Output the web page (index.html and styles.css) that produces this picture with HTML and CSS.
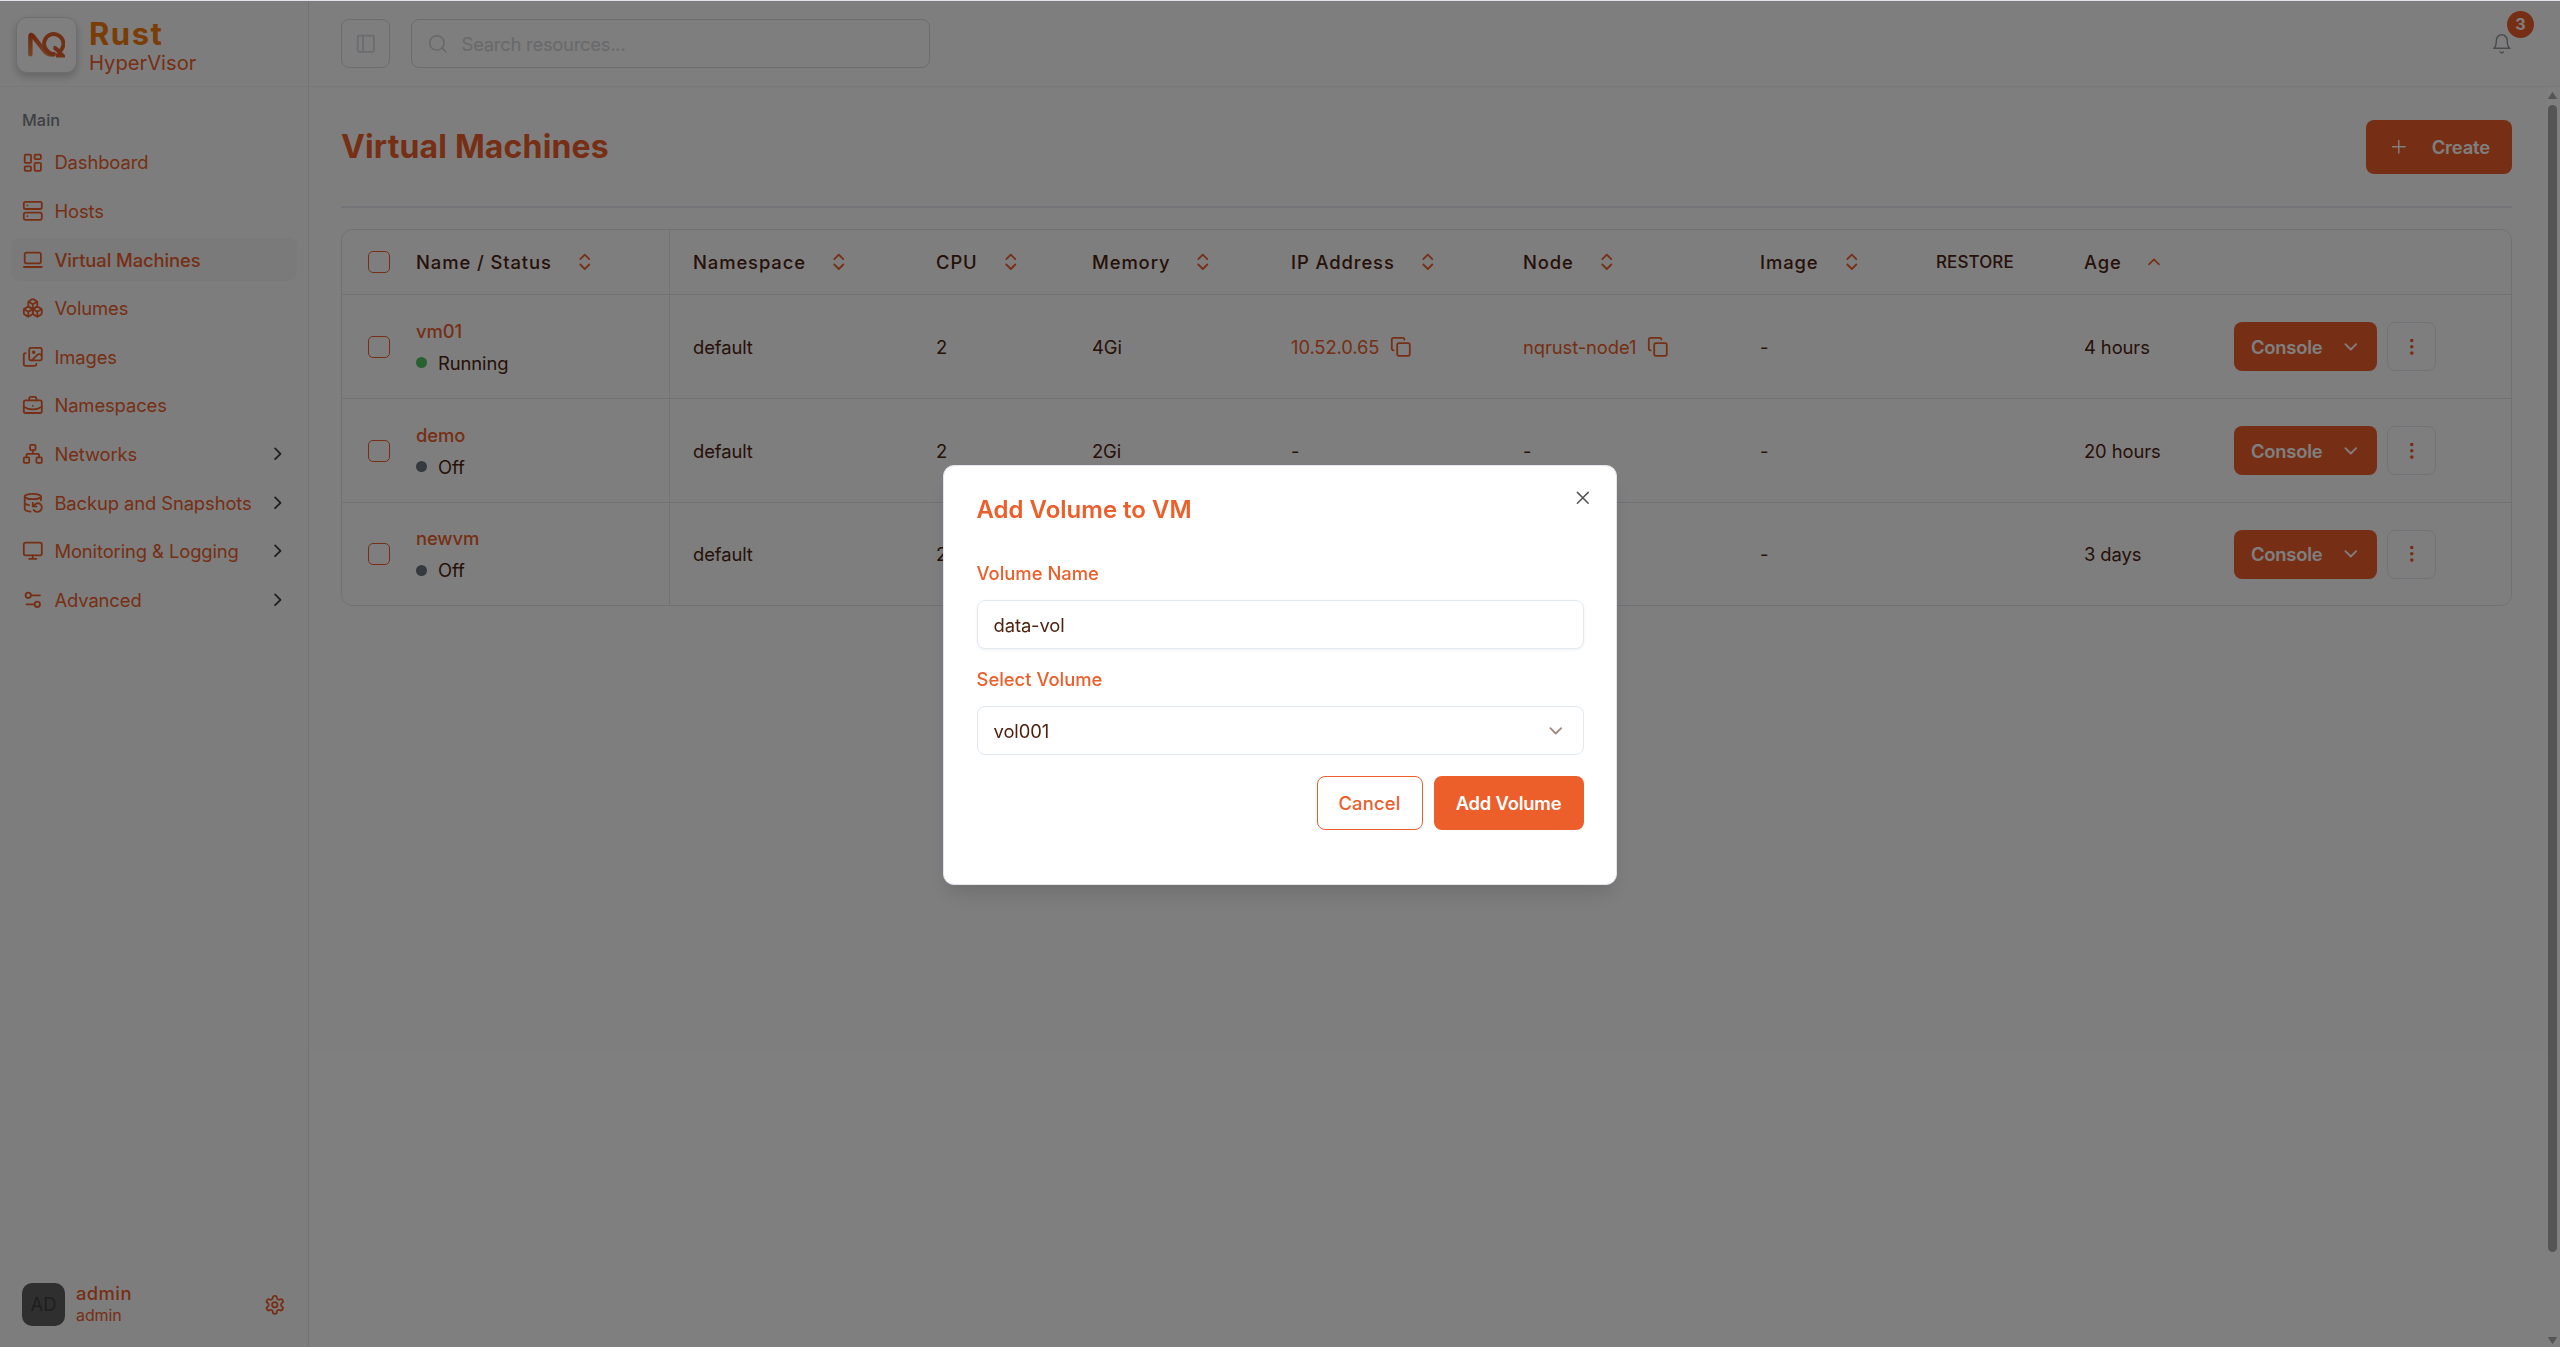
FILE: index.html
```html
<!DOCTYPE html>
<html lang="en">
<head>
<meta charset="utf-8">
<title>Virtual Machines</title>
<link rel="stylesheet" href="styles.css">
</head>
<body>

<svg class="sprite">
  <symbol id="dashboard" viewBox="0 0 24 24"><rect x="3" y="3" width="7" height="9" rx="1"/><rect x="14" y="3" width="7" height="5" rx="1"/><rect x="14" y="12" width="7" height="9" rx="1"/><rect x="3" y="16" width="7" height="5" rx="1"/></symbol>
  <symbol id="server" viewBox="0 0 24 24"><rect x="2" y="2" width="20" height="8" rx="2"/><rect x="2" y="14" width="20" height="8" rx="2"/><path d="M6 6h.01M6 18h.01"/></symbol>
  <symbol id="laptop" viewBox="0 0 24 24"><rect x="3" y="4" width="18" height="12" rx="2"/><path d="M2 20h20"/></symbol>
  <symbol id="boxes" viewBox="0 0 24 24"><path d="M2.97 12.92A2 2 0 0 0 2 14.63v3.24a2 2 0 0 0 .97 1.71l3 1.8a2 2 0 0 0 2.06 0L12 19v-5.5l-5-3-4.03 2.42Z"/><path d="m7 16.5-4.74-2.85M7 16.5l5-3M7 16.5v5.17"/><path d="M12 13.5V19l3.97 2.38a2 2 0 0 0 2.06 0l3-1.8a2 2 0 0 0 .97-1.71v-3.24a2 2 0 0 0-.97-1.71L17 10.5l-5 3Z"/><path d="m17 16.5-5-3M17 16.5l4.74-2.85M17 16.5v5.17"/><path d="M7.97 4.42A2 2 0 0 0 7 6.13v4.37l5 3 5-3V6.13a2 2 0 0 0-.97-1.71l-3-1.8a2 2 0 0 0-2.06 0l-3 1.8Z"/><path d="M12 8 7.26 5.15M12 8l4.74-2.85M12 13.5V8"/></symbol>
  <symbol id="images" viewBox="0 0 24 24"><rect x="8" y="2" width="14" height="14" rx="2"/><path d="M4 8a2 2 0 0 0-2 2v10a2 2 0 0 0 2 2h10a2 2 0 0 0 2-2"/><circle cx="13" cy="7" r="1"/><path d="m22 11-1.3-1.3a2.4 2.4 0 0 0-3.4 0L11 16"/></symbol>
  <symbol id="briefcase" viewBox="0 0 24 24"><path d="M12 12h.01M16 6V4a2 2 0 0 0-2-2h-4a2 2 0 0 0-2 2v2M22 13a18.15 18.15 0 0 1-20 0"/><rect x="2" y="6" width="20" height="14" rx="2"/></symbol>
  <symbol id="network" viewBox="0 0 24 24"><rect x="16" y="16" width="6" height="6" rx="1"/><rect x="2" y="16" width="6" height="6" rx="1"/><rect x="9" y="2" width="6" height="6" rx="1"/><path d="M5 16v-3a1 1 0 0 1 1-1h12a1 1 0 0 1 1 1v3M12 12V8"/></symbol>
  <symbol id="backup" viewBox="0 0 24 24"><ellipse cx="12" cy="5" rx="9" ry="3"/><path d="M3 12a9 3 0 0 0 5 2.69M21 9.3V5M3 5v14a9 3 0 0 0 6.47 2.88M12 12v4h4"/><path d="M13 20a5 5 0 0 0 9-3 4.5 4.5 0 0 0-4.5-4.5c-1.33 0-2.54.54-3.41 1.41L12 16"/></symbol>
  <symbol id="monitor" viewBox="0 0 24 24"><rect x="2" y="3" width="20" height="14" rx="2"/><path d="M8 21h8M12 17v4"/></symbol>
  <symbol id="sliders" viewBox="0 0 24 24"><path d="M20 7h-9M14 17H5"/><circle cx="17" cy="17" r="3"/><circle cx="7" cy="7" r="3"/></symbol>
  <symbol id="gear" viewBox="0 0 24 24"><path d="M12.22 2h-.44a2 2 0 0 0-2 2v.18a2 2 0 0 1-1 1.73l-.43.25a2 2 0 0 1-2 0l-.15-.08a2 2 0 0 0-2.73.73l-.22.38a2 2 0 0 0 .73 2.73l.15.1a2 2 0 0 1 1 1.72v.51a2 2 0 0 1-1 1.74l-.15.09a2 2 0 0 0-.73 2.73l.22.38a2 2 0 0 0 2.73.73l.15-.08a2 2 0 0 1 2 0l.43.25a2 2 0 0 1 1 1.73V20a2 2 0 0 0 2 2h.44a2 2 0 0 0 2-2v-.18a2 2 0 0 1 1-1.73l.43-.25a2 2 0 0 1 2 0l.15.08a2 2 0 0 0 2.73-.73l.22-.39a2 2 0 0 0-.73-2.73l-.15-.08a2 2 0 0 1-1-1.74v-.5a2 2 0 0 1 1-1.74l.15-.09a2 2 0 0 0 .73-2.73l-.22-.38a2 2 0 0 0-2.73-.73l-.15.08a2 2 0 0 1-2 0l-.43-.25a2 2 0 0 1-1-1.73V4a2 2 0 0 0-2-2z"/><circle cx="12" cy="12" r="3"/></symbol>
  <symbol id="panel" viewBox="0 0 24 24"><rect x="3" y="3" width="18" height="18" rx="2"/><path d="M9 3v18"/></symbol>
  <symbol id="search" viewBox="0 0 24 24"><circle cx="11" cy="11" r="8"/><path d="m21 21-4.3-4.3"/></symbol>
  <symbol id="bell" viewBox="0 0 24 24"><path d="M6 8a6 6 0 0 1 12 0c0 7 3 9 3 9H3s3-2 3-9M10.3 21a1.94 1.94 0 0 0 3.4 0"/></symbol>
  <symbol id="right" viewBox="0 0 24 24"><path d="m9 18 6-6-6-6"/></symbol>
  <symbol id="down" viewBox="0 0 24 24"><path d="m6 9 6 6 6-6"/></symbol>
  <symbol id="up" viewBox="0 0 24 24"><path d="m6 15 6-6 6 6"/></symbol>
  <symbol id="sort" viewBox="0 0 24 24"><path d="m7 15 5 5 5-5M7 9l5-5 5 5"/></symbol>
  <symbol id="copy" viewBox="0 0 24 24"><rect x="8" y="8" width="14" height="14" rx="2"/><path d="M4 16c-1.1 0-2-.9-2-2V4c0-1.1.9-2 2-2h10c1.1 0 2 .9 2 2"/></symbol>
  <symbol id="plus" viewBox="0 0 24 24"><path d="M5 12h14M12 5v14"/></symbol>
  <symbol id="close" viewBox="0 0 24 24"><path d="M18 6 6 18M6 6l12 12"/></symbol>
  <symbol id="dots" viewBox="0 0 24 24"><circle cx="12" cy="12" r="1"/><circle cx="12" cy="5" r="1"/><circle cx="12" cy="19" r="1"/></symbol>
</svg>

<div class="app">
  <aside class="sidebar">
    <div class="brand">
      <div class="logo">
        <svg viewBox="0 0 37 26">
          <defs><linearGradient id="logoFill" x1="0" y1="0" x2="0" y2="1"><stop offset="0" stop-color="#d9501e"/><stop offset="1" stop-color="#f0854a"/></linearGradient></defs>
          <path d="M2.4 22.3V4.6Q2.6 1.6 5 4.2L16.5 19Q20 23.5 26 22.3" fill="none" stroke="url(#logoFill)" stroke-width="4.4" stroke-linecap="round"/>
          <path d="M17.2 16A9.6 9.6 0 1 1 30 20.3M17.2 16Q20.5 22.3 27 22.3M25.5 15.8Q28 16 30.5 19.2L34.5 23.5H28" fill="none" stroke="#e0602b" stroke-width="3.9"/>
        </svg>
      </div>
      <div>
        <div class="brand-name">Rust</div>
        <div class="brand-sub">HyperVisor</div>
      </div>
    </div>
    <nav class="nav">
      <div class="nav-title">Main</div>
      <a class="nav-item"><svg class="icon"><use href="#dashboard"/></svg><span>Dashboard</span></a>
      <a class="nav-item"><svg class="icon"><use href="#server"/></svg><span>Hosts</span></a>
      <a class="nav-item active"><svg class="icon"><use href="#laptop"/></svg><span>Virtual Machines</span></a>
      <a class="nav-item"><svg class="icon"><use href="#boxes"/></svg><span>Volumes</span></a>
      <a class="nav-item"><svg class="icon"><use href="#images"/></svg><span>Images</span></a>
      <a class="nav-item"><svg class="icon"><use href="#briefcase"/></svg><span>Namespaces</span></a>
      <a class="nav-item"><svg class="icon"><use href="#network"/></svg><span>Networks</span><svg class="icon arrow"><use href="#right"/></svg></a>
      <a class="nav-item"><svg class="icon"><use href="#backup"/></svg><span>Backup and Snapshots</span><svg class="icon arrow"><use href="#right"/></svg></a>
      <a class="nav-item"><svg class="icon"><use href="#monitor"/></svg><span>Monitoring &amp; Logging</span><svg class="icon arrow"><use href="#right"/></svg></a>
      <a class="nav-item"><svg class="icon"><use href="#sliders"/></svg><span>Advanced</span><svg class="icon arrow"><use href="#right"/></svg></a>
    </nav>
    <div class="user">
      <div class="avatar">AD</div>
      <div class="user-text">
        <div class="user-name">admin</div>
        <div class="user-role">admin</div>
      </div>
      <svg class="icon"><use href="#gear"/></svg>
    </div>
  </aside>

  <div class="main">
    <header class="topbar">
      <button class="toggle"><svg class="icon"><use href="#panel"/></svg></button>
      <div class="search"><svg class="icon thin"><use href="#search"/></svg><span>Search resources...</span></div>
      <div class="bell"><svg class="icon thin"><use href="#bell"/></svg><span class="badge">3</span></div>
    </header>
    <div class="scroll-area">
      <div class="content">
        <div class="page-head">
          <h1>Virtual Machines</h1>
          <button class="btn create"><svg class="icon thin"><use href="#plus"/></svg>Create</button>
        </div>
        <div class="table-wrap">
          <table>
            <colgroup><col class="c-name"><col class="c-ns"><col class="c-cpu"><col class="c-mem"><col class="c-ip"><col class="c-node"><col class="c-image"><col class="c-restore"><col class="c-age"><col></colgroup>
            <thead>
              <tr>
                <th class="first"><div class="cell"><i class="check"></i>Name / Status<svg class="icon"><use href="#sort"/></svg></div></th>
                <th><div class="cell">Namespace<svg class="icon"><use href="#sort"/></svg></div></th>
                <th><div class="cell">CPU<svg class="icon"><use href="#sort"/></svg></div></th>
                <th><div class="cell">Memory<svg class="icon"><use href="#sort"/></svg></div></th>
                <th><div class="cell">IP Address<svg class="icon"><use href="#sort"/></svg></div></th>
                <th><div class="cell">Node<svg class="icon"><use href="#sort"/></svg></div></th>
                <th><div class="cell">Image<svg class="icon"><use href="#sort"/></svg></div></th>
                <th><div class="cell restore">RESTORE</div></th>
                <th><div class="cell">Age<svg class="icon up"><use href="#up"/></svg></div></th>
                <th></th>
              </tr>
            </thead>
            <tbody>
              <tr>
                <td class="first"><div class="cell"><i class="check"></i><div><div class="vm-name">vm01</div><div class="status"><i class="dot running"></i>Running</div></div></div></td>
                <td>default</td>
                <td>2</td>
                <td>4Gi</td>
                <td><div class="cell link">10.52.0.65<svg class="icon"><use href="#copy"/></svg></div></td>
                <td><div class="cell link">nqrust-node1<svg class="icon"><use href="#copy"/></svg></div></td>
                <td>-</td>
                <td></td>
                <td>4 hours</td>
                <td><div class="actions"><button class="btn console">Console<svg class="icon"><use href="#down"/></svg></button><button class="more"><svg class="icon"><use href="#dots"/></svg></button></div></td>
              </tr>
              <tr>
                <td class="first"><div class="cell"><i class="check"></i><div><div class="vm-name">demo</div><div class="status"><i class="dot"></i>Off</div></div></div></td>
                <td>default</td>
                <td>2</td>
                <td>2Gi</td>
                <td>-</td>
                <td>-</td>
                <td>-</td>
                <td></td>
                <td>20 hours</td>
                <td><div class="actions"><button class="btn console">Console<svg class="icon"><use href="#down"/></svg></button><button class="more"><svg class="icon"><use href="#dots"/></svg></button></div></td>
              </tr>
              <tr>
                <td class="first"><div class="cell"><i class="check"></i><div><div class="vm-name">newvm</div><div class="status"><i class="dot"></i>Off</div></div></div></td>
                <td>default</td>
                <td>2</td>
                <td></td>
                <td></td>
                <td></td>
                <td>-</td>
                <td></td>
                <td>3 days</td>
                <td><div class="actions"><button class="btn console">Console<svg class="icon"><use href="#down"/></svg></button><button class="more"><svg class="icon"><use href="#dots"/></svg></button></div></td>
              </tr>
            </tbody>
          </table>
        </div>
      </div>
      <div class="scrollbar">
        <svg viewBox="0 0 9 7"><path d="M4.5 .5 8.5 6.5H.5z"/></svg>
        <div class="thumb"></div>
        <svg viewBox="0 0 9 7"><path d="M4.5 6.5 8.5 .5H.5z"/></svg>
      </div>
    </div>
  </div>
</div>

<div class="overlay">
  <div class="modal">
    <svg class="icon close"><use href="#close"/></svg>
    <h2>Add Volume to VM</h2>
    <label class="label">Volume Name</label>
    <div class="field input">data-vol</div>
    <label class="label">Select Volume</label>
    <div class="field select">vol001<svg class="icon"><use href="#down"/></svg></div>
    <div class="buttons">
      <button class="btn cancel">Cancel</button>
      <button class="btn add">Add Volume</button>
    </div>
  </div>
</div>

</body>
</html>
```
FILE: styles.css
```css
*{
box-sizing:border-box;
}
body{
margin:0;
height:1347px;
overflow:hidden;
background:#dfe2e9;
color:#4d2310;
font-family:Inter,"Liberation Sans",sans-serif;
font-size:18.4px;
letter-spacing:-0.1px;
}
button{
font:inherit;
letter-spacing:inherit;
}
.sprite{
display:none;
}
.icon{
width:21.6px;
height:21.6px;
flex:none;
fill:none;
stroke:currentColor;
stroke-width:2;
stroke-linecap:round;
stroke-linejoin:round;
}
.icon.thin{
stroke-width:1.6;
}
.app{
display:flex;
height:1346px;
margin-top:1px;
background:#fff;
}

/* sidebar */
.sidebar{
display:flex;
flex-direction:column;
width:309px;
flex:none;
background:#fbfbfb;
border-right:1px solid #e6e6ea;
color:#ec5e2a;
}
.brand{
display:flex;
gap:12px;
height:86px;
flex:none;
padding:16px 0 0 16px;
border-bottom:1px solid #f1f1f3;
}
.logo{
display:flex;
align-items:center;
justify-content:center;
width:61px;
height:56px;
border:1px solid #dcdce4;
border-radius:11px;
background:#fff;
box-shadow:0 4px 8px rgba(0,0,0,0.2);
}
.logo svg{
width:37px;
height:26px;
}
.brand-name{
height:33px;
font-size:31px;
line-height:33px;
font-weight:700;
letter-spacing:1.5px;
color:#f57a0c;
}
.brand-sub{
font-size:20.2px;
line-height:26px;
letter-spacing:0;
}
.nav{
display:flex;
flex-direction:column;
gap:5.4px;
padding:21px 11px 0;
}
.nav-title{
height:27.5px;
padding-left:11px;
font-size:16.2px;
line-height:25px;
font-weight:500;
letter-spacing:0.1px;
color:#7c7f85;
}
.nav-item{
display:flex;
align-items:center;
gap:10.8px;
height:43.2px;
padding:0 8.5px 0 11px;
border-radius:8px;
}
.nav-item.active{
background:#f4f4f5;
font-weight:500;
}
.arrow{
margin-left:auto;
color:#3c3c3c;
}
.user{
display:flex;
align-items:center;
gap:11px;
margin-top:auto;
padding:0 22px 20px;
}
.avatar{
width:43px;
height:43px;
border-radius:10px;
background:#5f5f5f;
color:#3c3c3c;
line-height:43px;
text-align:center;
}
.user-text{
flex:1;
}
.user-name{
font-weight:500;
line-height:22px;
letter-spacing:0.4px;
}
.user-role{
font-size:16px;
line-height:23px;
}

/* top bar */
.main{
flex:1;
display:flex;
flex-direction:column;
min-width:0;
}
.topbar{
display:flex;
align-items:center;
height:86px;
flex:none;
padding:0 38px 0 32px;
background:#fcfcfc;
border-bottom:1px solid #f1f1f3;
}
.toggle{
display:flex;
align-items:center;
justify-content:center;
width:49px;
height:49px;
padding:0;
border:1px solid #dadadf;
border-radius:8px;
background:none;
color:#d6d6e0;
}
.search{
display:flex;
align-items:center;
gap:13px;
width:519px;
height:49px;
margin-left:21px;
padding-left:15px;
border:1px solid #dadadf;
border-radius:8px;
color:#d2d2d6;
}
.search .icon{
color:#cfcfd3;
}
.search span{
letter-spacing:-0.25px;
}
.bell{
position:relative;
display:flex;
margin-left:auto;
margin-right:9px;
color:#94979f;
}
.badge{
position:absolute;
right:-21px;
top:-22px;
width:27px;
height:27px;
border-radius:50%;
background:#ec5e2a;
color:#fff;
font-size:16.2px;
font-weight:700;
line-height:27px;
text-align:center;
}

/* page */
.scroll-area{
display:flex;
flex:1;
min-height:0;
}
.content{
flex:1;
min-width:0;
height:964px;
padding:33px 35px 0 32px;
background:#fdfdfd;
}
.page-head{
display:flex;
align-items:flex-start;
justify-content:space-between;
height:88px;
border-bottom:2px solid #e6e6f0;
}
h1{
margin:0;
font-size:32px;
line-height:53px;
font-weight:700;
letter-spacing:0.15px;
color:#ec5e2a;
}
.btn{
display:flex;
align-items:center;
justify-content:center;
padding:0;
border:none;
border-radius:8px;
background:#ec5e2a;
color:#fff;
font-weight:600;
letter-spacing:-0.2px;
}
.create{
width:146px;
height:54px;
gap:22px;
}
.table-wrap{
margin-top:21px;
border:1px solid #e2e3ea;
border-radius:11px;
overflow:hidden;
}
table{
width:100%;
table-layout:fixed;
border-collapse:separate;
border-spacing:0;
}
.c-name{width:328px;}
.c-ns{width:243px;}
.c-cpu{width:156px;}
.c-mem{width:199px;}
.c-ip{width:232px;}
.c-node{width:237px;}
.c-image{width:176px;}
.c-restore{width:148px;}
.c-age{width:150px;}
th,td{
padding:0 0 0 23px;
text-align:left;
border-bottom:1px solid #e1e5ec;
}
th{
height:65px;
font-weight:500;
letter-spacing:0.9px;
}
td{
height:104px;
}
tr:last-child td{
height:102px;
border-bottom:none;
}
thead tr:last-child th{
border-bottom:1px solid #e1e5ec;
}
th.first,td.first{
padding-left:26px;
border-right:1px solid #e1e5ec;
}
.cell{
display:flex;
align-items:center;
}
th .icon{
margin-left:22px;
color:#ec5e2a;
}
th .icon.up{
width:20px;
}
.restore{
font-size:17px;
letter-spacing:0.1px;
}
.check{
width:22px;
height:22px;
margin-right:26px;
flex:none;
border:1px solid #ec5e2a;
border-radius:5px;
}
.vm-name{
font-weight:500;
line-height:32px;
color:#ec5e2a;
}
.status{
display:flex;
align-items:center;
line-height:32px;
}
.dot{
width:11px;
height:11px;
margin-right:11px;
border-radius:50%;
background:#6b7280;
}
.dot.running{
background:#4cc35f;
}
.link{
color:#ec5e2a;
}
.link .icon{
margin-left:11px;
}
.actions{
display:flex;
gap:10px;
}
.console{
width:143px;
height:49px;
padding-left:1px;
gap:17px;
}
.more{
display:flex;
align-items:center;
justify-content:center;
width:49px;
height:49px;
padding:0;
border:1px solid #e2e5ee;
border-radius:8px;
background:none;
color:#ec5e2a;
}
.scrollbar{
display:flex;
flex-direction:column;
align-items:center;
width:12px;
padding:5px 2px 3px 0;
margin-right:1px;
}
.scrollbar svg{
width:9px;
height:7px;
fill:#aaa;
stroke:#aaa;
stroke-linejoin:round;
}
.thumb{
width:9px;
height:1147px;
margin:6px 0 auto;
border-radius:5px;
background:#aaa;
}

/* dialog */
.overlay{
position:fixed;
left:0;
right:0;
top:1px;
bottom:0;
display:flex;
align-items:center;
justify-content:center;
padding-top:2px;
background:rgba(0,0,0,0.5);
}
.modal{
position:relative;
width:674px;
height:420px;
padding:32px 32.5px 0;
border:1px solid #e2e5ee;
border-radius:11px;
background:#fff;
box-shadow:0 13px 20px -4px rgba(0,0,0,0.12);
}
.close{
position:absolute;
right:22px;
top:21px;
color:#555;
stroke-width:1.7;
}
h2{
margin:0 0 42px;
font-size:24px;
line-height:24px;
font-weight:600;
letter-spacing:0;
color:#ec5e2a;
}
.label{
display:block;
margin-bottom:17px;
line-height:19px;
font-weight:500;
letter-spacing:0;
color:#ec5e2a;
}
.field{
display:flex;
align-items:center;
justify-content:space-between;
height:49px;
padding:0 16px;
border:1px solid #e2e8f0;
border-radius:8px;
}
.input{
margin-bottom:21px;
box-shadow:0 1px 3px rgba(0,0,0,0.06);
}
.select .icon{
color:#a6897d;
margin-right:0;
}
.buttons{
display:flex;
justify-content:flex-end;
gap:11px;
margin-top:21px;
}
.cancel{
width:106px;
height:54px;
border:1px solid #ec5e2a;
background:#fff;
color:#ec5e2a;
font-weight:500;
letter-spacing:0.2px;
}
.add{
width:150px;
height:54px;
}
```
